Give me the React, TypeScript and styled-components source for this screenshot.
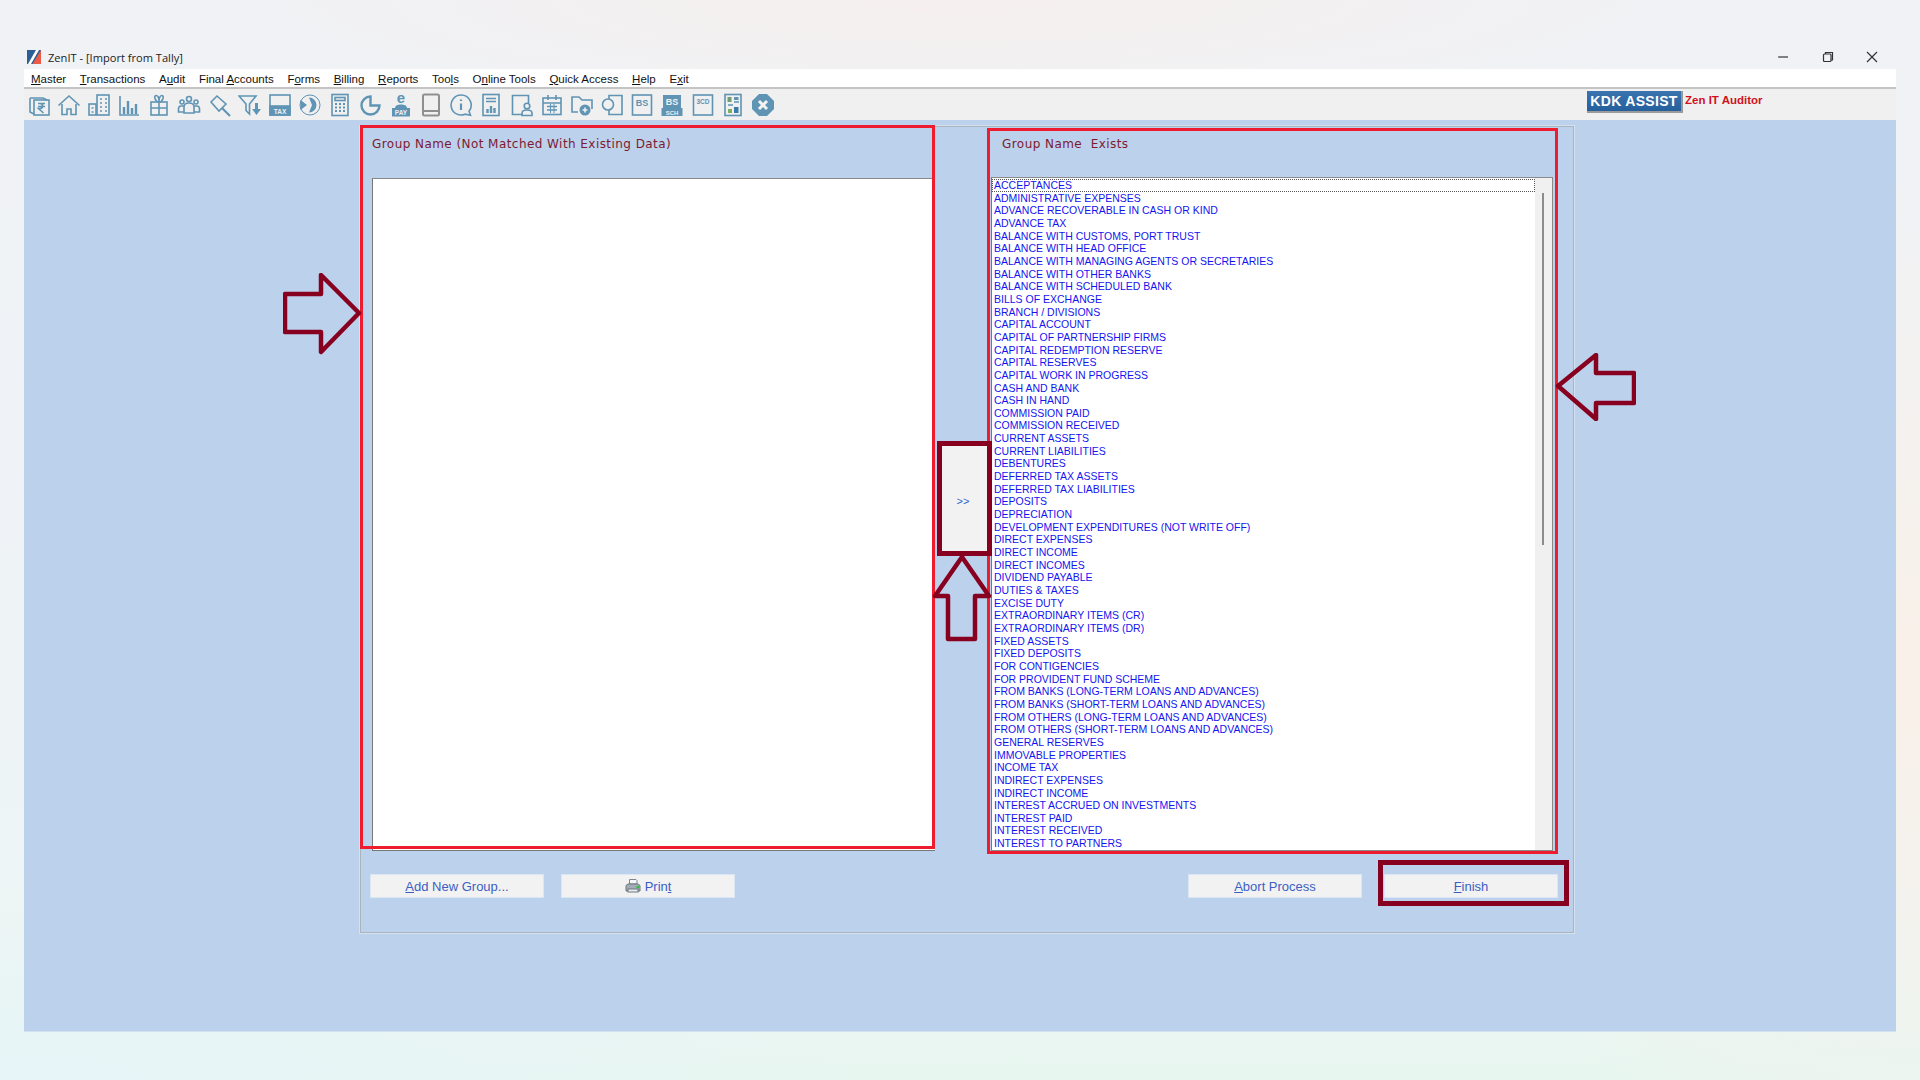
import { createGlobalStyle, styled } from "styled-components";

const GlobalStyle = createGlobalStyle`
  html, body {
    margin: 0;
    padding: 0;
  }
  body {
    font-family: "Liberation Sans", Arial, sans-serif;
    background:
      radial-gradient(ellipse 500px 520px at 100% 62%, #f9f0e8 0%, rgba(249, 240, 232, 0) 100%),
      radial-gradient(ellipse 800px 120px at 50% 0%, #f5efee 0%, rgba(245, 239, 238, 0) 100%),
      radial-gradient(ellipse 900px 160px at 0% 100%, #e7f4f8 0%, rgba(231, 244, 248, 0) 100%),
      linear-gradient(180deg, #f0f2f5 0%, #eff3f7 45%, #eef5f6 80%, #e8f6f0 100%);
  }
`;

const ToolText = styled.text<{ $light?: boolean }>`
  fill: ${(p) => (p.$light ? "#f0f0f0" : "currentColor")};
  stroke: none;
  font-family: "Liberation Sans", sans-serif;
  font-weight: 700;
  text-anchor: middle;
`;

const GROUPS = [
  "ACCEPTANCES",
  "ADMINISTRATIVE EXPENSES",
  "ADVANCE RECOVERABLE IN CASH OR KIND",
  "ADVANCE TAX",
  "BALANCE WITH CUSTOMS, PORT TRUST",
  "BALANCE WITH HEAD OFFICE",
  "BALANCE WITH MANAGING AGENTS OR SECRETARIES",
  "BALANCE WITH OTHER BANKS",
  "BALANCE WITH SCHEDULED BANK",
  "BILLS OF EXCHANGE",
  "BRANCH / DIVISIONS",
  "CAPITAL ACCOUNT",
  "CAPITAL OF PARTNERSHIP FIRMS",
  "CAPITAL REDEMPTION RESERVE",
  "CAPITAL RESERVES",
  "CAPITAL WORK IN PROGRESS",
  "CASH AND BANK",
  "CASH IN HAND",
  "COMMISSION PAID",
  "COMMISSION RECEIVED",
  "CURRENT ASSETS",
  "CURRENT LIABILITIES",
  "DEBENTURES",
  "DEFERRED TAX ASSETS",
  "DEFERRED TAX LIABILITIES",
  "DEPOSITS",
  "DEPRECIATION",
  "DEVELOPMENT EXPENDITURES (NOT WRITE OFF)",
  "DIRECT EXPENSES",
  "DIRECT INCOME",
  "DIRECT INCOMES",
  "DIVIDEND PAYABLE",
  "DUTIES & TAXES",
  "EXCISE DUTY",
  "EXTRAORDINARY ITEMS (CR)",
  "EXTRAORDINARY ITEMS (DR)",
  "FIXED ASSETS",
  "FIXED DEPOSITS",
  "FOR CONTIGENCIES",
  "FOR PROVIDENT FUND SCHEME",
  "FROM BANKS (LONG-TERM LOANS AND ADVANCES)",
  "FROM BANKS (SHORT-TERM LOANS AND ADVANCES)",
  "FROM OTHERS (LONG-TERM LOANS AND ADVANCES)",
  "FROM OTHERS (SHORT-TERM LOANS AND ADVANCES)",
  "GENERAL RESERVES",
  "IMMOVABLE PROPERTIES",
  "INCOME TAX",
  "INDIRECT EXPENSES",
  "INDIRECT INCOME",
  "INTEREST ACCRUED ON INVESTMENTS",
  "INTEREST PAID",
  "INTEREST RECEIVED",
  "INTEREST TO PARTNERS",
];

const MENUS: [string, string, string][] = [
  ["", "M", "aster"],
  ["", "T", "ransactions"],
  ["A", "u", "dit"],
  ["Final ", "A", "ccounts"],
  ["F", "o", "rms"],
  ["", "B", "illing"],
  ["", "R", "eports"],
  ["Too", "l", "s"],
  ["O", "n", "line Tools"],
  ["", "Q", "uick Access"],
  ["", "H", "elp"],
  ["E", "x", "it"],
];

const TOOL_ICONS = [
  <>
    <path d="M3 5h13l4 2M3 5v14l4 2" />
    <rect x="7" y="7" width="15" height="15" />
    <path d="M11 10.5h7M11 13.5h7M13 10.500c3.500 0 3.500 5 0 5h-1.500l5 4.500" />
  </>,
  <>
    <path d="M1.500 12.500 12 3l10.500 9.500" />
    <path d="M5 11v10.500h5V16h4v5.500h5V11" />
  </>,
  <>
    <rect x="2" y="11" width="7" height="11" />
    <rect x="10" y="2" width="12" height="20" />
    <path d="M13 6h2M18 6h2M13 10h2M18 10h2M13 14h2M18 14h2M13 18h2M18 18h2M4.500 15h2M4.500 19h2" />
  </>,
  <>
    <path d="M3 3v19h19" />
    <path d="M7 21v-7M11 21V8M15 21v-6M19 21V11" strokeWidth="2.400" />
  </>,
  <>
    <rect x="4" y="9" width="16" height="13" />
    <path d="M4 15h16M12 9v13M12 9C8 9 6.500 2.500 9 2.500S12 6 12 9c0-3 .5-6.500 3-6.500S16 9 12 9" />
  </>,
  <>
    <circle cx="12" cy="6" r="2.500" />
    <circle cx="5" cy="9" r="2" />
    <circle cx="19" cy="9" r="2" />
    <path d="M7 20v-6c0-3 2-4 5-4s5 1 5 4v6zM7 13H4c-1.500 0-2.500 1-2.500 3v3H7M17 13h3c1.500 0 2.500 1 2.500 3v3H17" />
  </>,
  <>
    <path d="M3 9 9 3l9 8-7 7z" />
    <path d="m14 15 8 8" strokeWidth="2.200" />
  </>,
  <>
    <path d="M1 3h17l-6.500 8v10l-3.500-3.500V11z" />
    <path d="M17 10h3v6h3l-4.500 6-4.500-6h3z" fill="currentColor" stroke="none" />
  </>,
  <>
    <rect x="2" y="2" width="20" height="20" />
    <rect x="2" y="13" width="20" height="9" fill="currentColor" />
    <ToolText x="12" y="20.500" fontSize="6.500" $light>
      TAX
    </ToolText>
  </>,
  <>
    <circle cx="12" cy="12" r="10" strokeWidth="1" />
    <path d="M2.500 7 9 12l-6.500 5z" fill="currentColor" stroke="none" />
    <path d="M11 4.500a7.500 7.500 0 0 1 0 15l3-7.500z" fill="currentColor" stroke="none" />
  </>,
  <>
    <rect x="4" y="1.500" width="16" height="21" />
    <rect x="7" y="4.500" width="10" height="3" />
    <path d="M7 11h2M11 11h2M15 11h2M7 14.500h2M11 14.500h2M15 14.500h2M7 18h2M11 18h2M15 18h2" strokeWidth="2" />
  </>,
  <path d="M11.500 3.500a9 9 0 1 0 9 9h-9z" strokeWidth="2.400" />,
  <>
    <ToolText x="12" y="9.500" fontSize="15">
      e
    </ToolText>
    <path d="M6 15c0-2.500 3-3.500 6-3.500s6 1 6 3.500z" fill="currentColor" stroke="none" />
    <rect x="3" y="15" width="18" height="8.500" fill="currentColor" stroke="none" />
    <ToolText x="12" y="22" fontSize="6.500" $light>
      PAY
    </ToolText>
  </>,
  <g color="#8f8f8f">
    <rect x="4" y="1.500" width="16" height="21" rx="1.500" strokeWidth="2" />
    <path d="M4 18h16" strokeWidth="2" />
  </g>,
  <>
    <path d="M12 2a10 10 0 1 0 4 19.200l5.500 1-1.500-4A10 10 0 0 0 12 2z" />
    <path d="M12 6.500v1.500M12 10.500V17" strokeWidth="2.200" />
  </>,
  <>
    <rect x="4" y="1.500" width="16" height="21" />
    <path d="M7 5.500h10M7 8.500h10" />
    <path d="M8.500 20v-4M12 20v-7M15.500 20v-5" strokeWidth="2.400" />
  </>,
  <>
    <path d="M13 21.500H2.500V2.500h16V10" />
    <circle cx="17" cy="13" r="2.800" />
    <path d="M12 22.500V20c0-2 2-3 5-3s5 1 5 3v2.500z" />
  </>,
  <>
    <rect x="3" y="5" width="18" height="16.500" />
    <path d="M8 2v5M16 2v5M3 10h18M7 13.500h10M7 17h10" />
    <path d="M10.500 11v9M14 11v9" strokeWidth="1" />
  </>,
  <>
    <path d="M8 19H2V4h7l3 3h10v9" />
    <circle cx="15" cy="17" r="5.500" fill="currentColor" stroke="none" />
    <path d="M15 14.500v5M12.500 17h5" stroke="#f0f0f0" />
  </>,
  <>
    <path d="M9 6V2.500h13v19H9V17" />
    <circle cx="8" cy="11.500" r="5.500" />
  </>,
  <>
    <rect x="2.500" y="2" width="19" height="20" />
    <ToolText x="12" y="13" fontSize="9">
      BS
    </ToolText>
  </>,
  <>
    <rect x="3" y="2" width="18" height="14" fill="currentColor" stroke="none" />
    <rect x="1.500" y="15" width="21" height="8" fill="currentColor" stroke="none" />
    <ToolText x="12" y="12" fontSize="9" $light>
      BS
    </ToolText>
    <ToolText x="12" y="21.500" fontSize="6" $light>
      SCH
    </ToolText>
  </>,
  <>
    <rect x="2.500" y="2" width="19" height="20" />
    <ToolText x="12" y="11" fontSize="6.500">
      3CD
    </ToolText>
  </>,
  <>
    <rect x="4" y="1.500" width="16" height="21" />
    <rect x="6.500" y="4" width="4" height="5" fill="#6d9f73" stroke="none" />
    <rect x="13" y="4" width="4.500" height="3" fill="currentColor" stroke="none" />
    <path d="M13 9h5M7 12h5" />
    <rect x="13" y="14" width="4.500" height="6" fill="#3c7aa8" stroke="none" />
    <rect x="7" y="16" width="4" height="4" fill="#7fae5d" stroke="none" />
  </>,
  <>
    <path d="M8 1h8l7 7v8l-7 7H8l-7-7V8z" fill="currentColor" stroke="none" />
    <path d="m8 8 8 8M16 8l-8 8" stroke="#f4f4f4" strokeWidth="3" />
  </>,
];

export default function App() {
  return (
    <Page>
      <GlobalStyle />
      <TitleBar>
        <TitleLeft>
          <AppLogo viewBox="0 0 14 14">
            <rect width="14" height="14" fill="#2d5f96" />
            <path d="M14 0v14H5.500z" fill="#ee5a45" />
            <path d="M9 0h3L4 14H1z" fill="#fff" />
          </AppLogo>
          <TitleText>ZenIT - [Import from Tally]</TitleText>
        </TitleLeft>
        <WindowButtons>
          <WindowIcon viewBox="0 0 12 12">
            <path d="M1 6h10" />
          </WindowIcon>
          <WindowIcon viewBox="0 0 12 12">
            <rect x="1.500" y="3" width="7.500" height="7.500" rx="1" />
            <path d="M3.500 3V1.500h7V9H9" />
          </WindowIcon>
          <WindowIcon viewBox="0 0 12 12">
            <path d="m1 1 10 10M11 1 1 11" />
          </WindowIcon>
        </WindowButtons>
      </TitleBar>

      <MenuBar>
        {MENUS.map(([before, key, after]) => (
          <MenuItem key={before + key + after}>
            {before}
            <u>{key}</u>
            {after}
          </MenuItem>
        ))}
      </MenuBar>

      <Toolbar>
        <ToolIcons>
          {TOOL_ICONS.map((icon, i) => (
            <ToolIcon key={i} viewBox="0 0 24 24">
              {icon}
            </ToolIcon>
          ))}
        </ToolIcons>
        <AssistGroup>
          <AssistButton>KDK ASSIST</AssistButton>
          <AuditorLabel>Zen IT Auditor</AuditorLabel>
        </AssistGroup>
      </Toolbar>

      <Workspace>
        <Panel>
          <ListsRow>
            <UnmatchedSection>
              <SectionTitle $top={7} $left={9}>
                Group Name (Not Matched With Existing Data)
              </SectionTitle>
              <UnmatchedList />
            </UnmatchedSection>

            <MoveColumn>
              <MoveButton>&gt;&gt;</MoveButton>
            </MoveColumn>

            <ExistingSection>
              <SectionTitle $top={4} $left={12}>
                Group Name&nbsp; Exists
              </SectionTitle>
              <ExistingList>
                <Rows>
                  {GROUPS.map((name, i) => (
                    <Row key={name} $focused={i === 0}>
                      {name}
                    </Row>
                  ))}
                </Rows>
                <ScrollTrack>
                  <ScrollThumb />
                </ScrollTrack>
              </ExistingList>
            </ExistingSection>
          </ListsRow>

          <ButtonRow>
            <ButtonGroup>
              <ActionButton>
                <span>
                  <u>A</u>dd New Group...
                </span>
              </ActionButton>
              <ActionButton>
                <PrinterIcon viewBox="0 0 16 16">
                  <path d="M4.500 6V1.500h6.500l1 1V6z" fill="#f4f6f8" stroke="#7d8791" />
                  <path d="M1 7.500 3 6h10l2 1.500V13H1z" fill="#a3acb5" stroke="#6c7680" />
                  <rect x="3" y="11" width="10" height="3" fill="#e9edf0" stroke="#6c7680" />
                  <rect x="11.500" y="8" width="2.500" height="2" fill="#2fbd45" />
                </PrinterIcon>
                <span>
                  Prin<u>t</u>
                </span>
              </ActionButton>
            </ButtonGroup>
            <ButtonGroup>
              <ActionButton>
                <span>
                  <u>A</u>bort Process
                </span>
              </ActionButton>
              <ActionButton $marked>
                <span>
                  <u>F</u>inish
                </span>
              </ActionButton>
            </ButtonGroup>
          </ButtonRow>
        </Panel>

        <RightArrow viewBox="0 0 80 82">
          <path d="M2 21h36V2l38 38-38 39V59H2z" />
        </RightArrow>
        <UpArrow viewBox="0 0 61 89">
          <path d="M30 3 57 42H43V85H16V42H3z" />
        </UpArrow>
        <LeftArrow viewBox="0 0 82 68">
          <path d="M4 33 42 2v18h38v30H42v16z" />
        </LeftArrow>
      </Workspace>
    </Page>
  );
}

const Page = styled.div`
  width: 1920px;
  height: 1080px;
  box-sizing: border-box;
  padding: 45px 24px 0;
  overflow: hidden;
`;

const TitleBar = styled.div`
  display: flex;
  align-items: center;
  justify-content: space-between;
  height: 24px;
`;

const TitleLeft = styled.div`
  display: flex;
  align-items: center;
  gap: 7px;
  padding-left: 3px;
`;

const AppLogo = styled.svg`
  width: 14px;
  height: 14px;
`;

const TitleText = styled.span`
  color: #222;
  font-family: "Open Sans", sans-serif;
  font-size: 11.1px;
`;

const WindowButtons = styled.div`
  display: flex;
  align-items: center;
  gap: 32.500px;
  padding-right: 18px;
`;

const WindowIcon = styled.svg`
  width: 12px;
  height: 12px;
  fill: none;
  stroke: #333;
  stroke-width: 1.200;
`;

const MenuBar = styled.nav`
  display: flex;
  align-items: center;
  gap: 13.7px;
  height: 20px;
  box-sizing: border-box;
  padding: 1px 0 0 7px;
  background: #fff;
  border-bottom: 2px solid #c4c4c4;
`;

const MenuItem = styled.span`
  color: #111;
  font-family: "Liberation Sans", sans-serif;
  font-size: 11.500px;
`;

const Toolbar = styled.div`
  display: flex;
  align-items: center;
  justify-content: space-between;
  height: 31px;
  background: #f0f0f0;
`;

const ToolIcons = styled.div`
  display: flex;
  gap: 6.2px;
  padding-left: 2.500px;
`;

const ToolIcon = styled.svg`
  width: 24px;
  height: 24px;
  color: #5f94b5;
  fill: none;
  stroke: currentColor;
  stroke-width: 1.6;
`;

const AssistGroup = styled.div`
  display: flex;
  align-items: flex-start;
  gap: 2px;
  width: 309px;
  align-self: flex-start;
  padding-top: 2px;
`;

const AssistButton = styled.div`
  width: 96px;
  height: 22px;
  box-sizing: border-box;
  color: #fff;
  background: linear-gradient(180deg, #3a74b0 0%, #255f9c 100%);
  border-right: 2px solid #9a9a9a;
  border-bottom: 2px solid #9a9a9a;
  font-size: 14px;
  font-weight: 700;
  letter-spacing: 0.3px;
  line-height: 20px;
  text-align: center;
`;

const AuditorLabel = styled.span`
  color: #d0101c;
  font-size: 11.500px;
  font-weight: 700;
  line-height: 18px;
`;

const Workspace = styled.main`
  position: relative;
  height: 912px;
  padding: 6px 0 0 336px;
  box-sizing: border-box;
  background: #bcd1ec;
  border-bottom: 1px solid #d3e0f0;
`;

const Panel = styled.section`
  display: flex;
  flex-direction: column;
  width: 1214px;
  height: 807px;
  box-sizing: border-box;
  box-shadow: inset 0 0 0 1px #abb3bd, 0 0 0 1px #d6e0ee;
`;

const ListsRow = styled.div`
  display: flex;
  align-items: flex-start;
  margin-top: -1px;
`;

const RedBox = styled.div`
  position: relative;
  display: flex;
  flex-direction: column;
  box-sizing: border-box;
  padding-top: 3px;

  &::after {
    content: "";
    position: absolute;
    inset: 0;
    z-index: 1;
    border: 3px solid #ed1c2e;
    pointer-events: none;
  }
`;

const UnmatchedSection = styled(RedBox)`
  width: 575px;
  height: 724px;
`;

const SectionTitle = styled.h2<{ $top: number; $left: number }>`
  margin: 0;
  padding: ${(p) => p.$top}px 0 0 ${(p) => p.$left + 3}px;
  color: #7c1a30;
  font-family: "DejaVu Sans", sans-serif;
  font-size: 12px;
  font-weight: 400;
  letter-spacing: 0.44px;
  line-height: 18px;
`;

const UnmatchedList = styled.div`
  flex: 1;
  margin: 25px 0 -2px 12px;
  background: #fff;
  border-top: 1px solid #8a8a8a;
  border-left: 1px solid #777;
  border-bottom: 1px solid #777;
`;

const MoveColumn = styled.div`
  position: relative;
  z-index: 2;
  width: 52px;
  padding: 316px 0 0 2px;
  box-sizing: border-box;
`;

const MoveButton = styled.div`
  display: flex;
  align-items: center;
  justify-content: center;
  width: 55px;
  height: 115px;
  box-sizing: border-box;
  padding: 4px 3px 0 0;
  color: #2f63d0;
  background: #f2f2f2;
  border: 5px solid #87001f;
  font-size: 11px;
`;

const ExistingSection = styled(RedBox)`
  width: 571px;
  height: 726px;
  margin-top: 3px;
  padding-bottom: 3px;
`;

const ExistingList = styled.div`
  display: flex;
  flex: 1;
  min-height: 0;
  margin: 24px 5px 0 4px;
  background: #fff;
  border: 1px solid #8a8a8a;
  border-left-color: #777;
`;

const Rows = styled.div`
  flex: 1;
  min-width: 0;
  padding-top: 1px;
  overflow: hidden;
`;

const Row = styled.div<{ $focused?: boolean }>`
  height: 12.67px;
  padding-left: 2px;
  box-sizing: border-box;
  color: #1414f0;
  font-family: "Liberation Sans", sans-serif;
  font-size: 10.5px;
  line-height: 12.67px;
  white-space: nowrap;
  outline: ${(p) => (p.$focused ? "1px dotted #555" : "none")};
  outline-offset: -1px;
`;

const ScrollTrack = styled.div`
  width: 17px;
  padding-top: 15px;
  box-sizing: border-box;
  background: #f0f0f0;
`;

const ScrollThumb = styled.div`
  width: 2px;
  height: 352px;
  margin-left: 7px;
  background: #8c8c8c;
`;

const ButtonRow = styled.div`
  display: flex;
  justify-content: space-between;
  margin-top: 20px;
  padding: 0 16px 0 10px;
`;

const ButtonGroup = styled.div`
  display: flex;
  gap: 17px;

  & + & {
    gap: 22px;
  }
`;

const ActionButton = styled.div<{ $marked?: boolean }>`
  position: relative;
  display: flex;
  align-items: center;
  justify-content: center;
  gap: 4px;
  width: 174px;
  height: 24px;
  color: #3c5fc4;
  background: #f2f2f2;
  box-shadow: inset 0 0 0 1px #dbe6f4;
  font-size: 13px;

  &::after {
    content: "";
    display: ${(p) => (p.$marked ? "block" : "none")};
    position: absolute;
    inset: -14px -11px -8px -6px;
    border: 5px solid #87001f;
    pointer-events: none;
  }
`;

const PrinterIcon = styled.svg`
  width: 16px;
  height: 16px;
`;

const AnnotationArrow = styled.svg`
  position: absolute;
  z-index: 3;
  fill: none;
  stroke: #87001f;
  stroke-width: 4.5;
  stroke-linejoin: round;
`;

const RightArrow = styled(AnnotationArrow)`
  left: 259px;
  top: 153px;
  width: 80px;
  height: 82px;
`;

const UpArrow = styled(AnnotationArrow)`
  left: 908px;
  top: 434px;
  width: 61px;
  height: 89px;
`;

const LeftArrow = styled(AnnotationArrow)`
  left: 1530px;
  top: 233px;
  width: 82px;
  height: 68px;
`;
